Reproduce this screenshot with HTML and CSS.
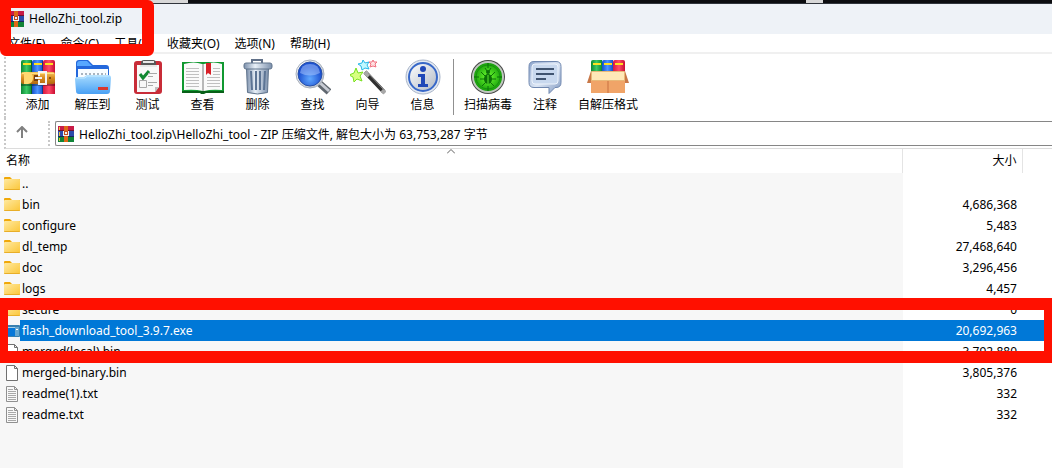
FILE: index.html
```html
<!DOCTYPE html>
<html lang="zh-CN">

<head>
    <meta charset="UTF-8">
    <meta name="viewport" content="width=device-width, initial-scale=1.0">
    <title>HelloZhi_tool.zip</title>
    <link rel="stylesheet" href="styles.css">
</head>

<body>

    <!-- shared icons -->
    <svg class="defs" aria-hidden="true">
        <defs>
            <linearGradient id="g-red"><stop offset="0" stop-color="#d81840"/><stop offset=".5" stop-color="#ff4c68"/><stop offset="1" stop-color="#c80c32"/></linearGradient>
            <linearGradient id="g-blue"><stop offset="0" stop-color="#1450c8"/><stop offset=".5" stop-color="#4c94ff"/><stop offset="1" stop-color="#1450c8"/></linearGradient>
            <linearGradient id="g-green"><stop offset="0" stop-color="#0c8834"/><stop offset=".5" stop-color="#3cc864"/><stop offset="1" stop-color="#0c8834"/></linearGradient>
            <linearGradient id="g-gold" x2="0" y2="1"><stop offset="0" stop-color="#f8c860"/><stop offset=".5" stop-color="#d88c20"/><stop offset="1" stop-color="#b06810"/></linearGradient>
            <linearGradient id="g-sky" x2="0" y2="1"><stop offset="0" stop-color="#a8dcff"/><stop offset="1" stop-color="#48a0f4"/></linearGradient>
            <linearGradient id="g-steel"><stop offset="0" stop-color="#7c90ac"/><stop offset=".4" stop-color="#e8f0f8"/><stop offset="1" stop-color="#7c90ac"/></linearGradient>
            <linearGradient id="g-silver" x2="1" y2="1"><stop offset="0" stop-color="#fff"/><stop offset="1" stop-color="#b0b8c4"/></linearGradient>
            <linearGradient id="g-note" x2="1" y2="1"><stop offset="0" stop-color="#8ca4cc"/><stop offset=".5" stop-color="#dce6f4"/><stop offset="1" stop-color="#8098c0"/></linearGradient>
            <radialGradient id="g-lens" cy=".7"><stop offset="0" stop-color="#60a8ff"/><stop offset="1" stop-color="#1c50d0"/></radialGradient>
            <radialGradient id="g-scan"><stop offset="0" stop-color="#70ff30"/><stop offset="1" stop-color="#109808"/></radialGradient>
            <linearGradient id="g-folder" x2="1" y2="1"><stop offset="0" stop-color="#ffe9a0"/><stop offset="1" stop-color="#fbc638"/></linearGradient>
            <symbol id="i-rar" viewBox="0 0 16 16">
                <path fill="#c81c48" d="M0 0h16v5H0z"/>
                <path fill="#2c4cac" d="M0 5h16v6H0z"/>
                <path fill="#108438" d="M0 11h16v5H0z"/>
                <path fill="#701030" d="M0 4h16v1H0z"/>
                <path fill="#1c2460" d="M0 10h16v1H0z"/>
                <path fill="#e8c040" d="M1 1h1v3H1zM1 6h1v4H1zM1 12h1v3H1z"/>
                <path fill="#e06818" d="M6 0h4v16H6z"/>
                <path fill="#c04c20" d="M5 5h6v5H5z"/>
                <path fill="#f4f4f4" d="M5 5h1v4h4V5h1v5H5zM7 6h2v2H7z"/>
            </symbol>
            <symbol id="i-folder" viewBox="0 0 16 16">
                <path fill="#f0a808" d="M0 2q0-1 1-1h5l2 2h7q1 0 1 1v4H0z"/>
                <rect y="3" width="16" height="11" rx="1" fill="url(#g-folder)"/>
                <path fill="#e8ae28" d="M0 13h16q0 1-1 1H1q-1 0-1-1z"/>
            </symbol>
            <symbol id="i-file" viewBox="0 0 16 16">
                <path fill="#fff" stroke="#707070" d="M2.500.5h8l3 3v12h-11zM10.500.5v3h3"/>
            </symbol>
            <symbol id="i-text" viewBox="0 0 16 16">
                <path fill="#f8f8f8" stroke="#909090" d="M2.500.5h8l3 3v12h-11zM10.500.5v3h3"/>
                <path stroke="#a8a8a8" d="M4 3.500h5M4 5.500h8M4 7.500h8M4 9.500h8M4 11.500h8M4 13.500h8"/>
            </symbol>
            <symbol id="i-exe" viewBox="0 0 16 16">
                <path fill="#a8d0e8" stroke="#3880b0" d="M.5 2.500h15v11H.5z"/>
                <path fill="#3880b0" d="M1 2h14v2H1z"/>
                <path fill="#0878d8" d="M8 5h6v7H8z"/>
                <path fill="#0878d8" d="M3 5h8v8H3z"/>
                <path fill="#68a8d0" d="M11 4h4v9h-4z"/>
                <path fill="#fff" d="M12 6h2v1h-2z"/>
            </symbol>
        </defs>
    </svg>

    <div class="desktop"><span></span><i></i></div>

    <header class="titlebar">
        <svg class="icon"><use href="#i-rar"/></svg>
        <h1>HelloZhi_tool.zip</h1>
    </header>

    <nav class="menu">
        <button>文件(F)</button>
        <button>命令(C)</button>
        <button>工具(S)</button>
        <button>收藏夹(O)</button>
        <button>选项(N)</button>
        <button>帮助(H)</button>
    </nav>

    <div class="toolbar">
        <button>
            <svg viewBox="0 0 36 36">
                <path fill="url(#g-green)" d="M1 3q0-2 2-2h9v34H1z"/>
                <path fill="url(#g-blue)" d="M12 3q0-2 2-2h9v34H12z"/>
                <path fill="url(#g-red)" d="M23 3q0-2 2-2h8q2 0 2 2v32H23z"/>
                <path fill="#ffe020" d="M3 4h8v2H3zM14 4h8v2h-8zM25 4h8v2h-8z"/>
                <path fill="#00000050" d="M11 2h1v33h-1zM22 2h1v33h-1zM1 25h34v2H1z"/>
                <rect y="13" x="1" width="34" height="12" rx="2" fill="url(#g-gold)"/>
                <path fill="none" stroke="#ffe080" d="M2 14.500h32"/>
                <path fill="#ffd870" d="M4 13h4q5 1 5 6t-5 6H4z"/>
                <path fill="#784010" d="M14 16h4v6h-4z"/>
                <path fill="none" stroke="#f4f4f4" stroke-width="2" d="M19 17v-4h7v12h-7v-4M15 19h7"/>
                <path fill="#884c10" d="M29 18h2v2h-2z"/>
            </svg>
            <span>添加</span>
        </button>
        <button>
            <svg viewBox="0 0 36 36">
                <path fill="#2468dc" d="M1 4q0-3 3-3h9l5 5h13q3 0 3 3v12H1z"/>
                <path fill="#58a8ff" d="M2 5q0-3 3-3h7l5 5H2z"/>
                <path fill="#f8fcff" d="M3 10h30v11H3z"/>
                <path stroke="#a8b4c0" stroke-width="2" stroke-dasharray="2 2" d="M6 15h25"/>
                <path fill="url(#g-sky)" d="M0 20q0-2 2-2h7l3-2h21q3 0 3 3l-1 13q0 3-3 3H4q-3 0-3-3z"/>
                <path fill="none" stroke="#c8ecff" d="M1.500 19h8l3-2h21"/>
                <path fill="#d83830" d="M23 28h10v3H23z"/>
            </svg>
            <span>解压到</span>
        </button>
        <button>
            <svg viewBox="0 0 36 36">
                <rect x="4" y="2" width="28" height="33" rx="3" fill="#c82c38"/>
                <path fill="#f8f8f8" d="M7 6h22v22l-4 5H7z"/>
                <path fill="#c0c0c0" d="M29 28h-4v5z"/>
                <rect x="11" y="1" width="15" height="7" rx="3" fill="#585858"/>
                <path stroke="#e8e8e8" stroke-width="2" d="M13 3h11M10 7h17"/>
                <path fill="none" stroke="#108830" stroke-width="3" d="m10 15 3 4 6-7"/>
                <path fill="none" stroke="#a8a8a8" d="M9.500 21.500h7v7h-7zM18 14.500h9M18 17.500h5M18 23.500h9M18 26.500h5"/>
            </svg>
            <span>测试</span>
        </button>
        <button>
            <svg class="wide" viewBox="0 0 42 36">
                <path fill="#109830" d="M0 3h42v31H0z"/>
                <path fill="#086018" d="M0 32h42v2H24l-2 1h-3l-1-1H0z"/>
                <path fill="#fafafa" d="M2 5q10-3 18 0l1 27q-8-2-19-1zM22 5q10-3 18 0v26q-11-1-18 1z"/>
                <path fill="#b8b8b8" d="M20 5h2v27h-2z"/>
                <path stroke="#c0c0c0" d="M4 9.500h13M4 12.500h13M4 15.500h13M4 18.500h13M4 21.500h13M4 24.500h13M4 27.500h13M25 18.500h13M25 21.500h13M25 24.500h13M25 27.500h13M31 9.500h7M31 12.500h7M31 15.500h7"/>
                <path fill="#d82028" d="M24 4h5v12l-3-2-2 2z"/>
            </svg>
            <span>查看</span>
        </button>
        <button>
            <svg viewBox="0 0 36 36">
                <path fill="none" stroke="#607088" stroke-width="2" d="M12 4V1h10v3"/>
                <path fill="url(#g-steel)" stroke="#60748c" d="M6.500 9.500h22l-1 24q-10 3-20 0z"/>
                <path stroke="#5c7494" stroke-width="2" d="m11 12 1 19M16 12v19M20 12v19M25 12l-1 19"/>
                <rect x="4" y="4" width="28" height="6" rx="2" fill="url(#g-steel)" stroke="#60748c"/>
            </svg>
            <span>删除</span>
        </button>
        <button>
            <svg viewBox="0 0 36 36">
                <path stroke="#606870" stroke-width="7" d="m24 24 10 9"/>
                <path stroke="#c8ccd4" stroke-width="3" d="m24 23 10 9"/>
                <circle cx="15" cy="15" r="14" fill="url(#g-silver)" stroke="#a8b0bc"/>
                <circle cx="15" cy="15" r="12" fill="url(#g-lens)" stroke="#2850a8"/>
                <path fill="#b0ccff" fill-opacity=".5" d="M5 14q1-9 10-9t10 9q-10 5-20 0z"/>
            </svg>
            <span>查找</span>
        </button>
        <button>
            <svg viewBox="0 0 36 36">
                <path stroke="#303030" stroke-width="4" d="m15 13 19 20"/>
                <path stroke="#a8a8a8" stroke-width="4" d="m15 13 4 4M32 31l3 3"/>
                <path stroke="#909090" d="m18 14 16 17"/>
                <path fill="#d8ff80" stroke="#78e020" d="m6 9 2 5 5-1-3 4 2 5-5-2-3 3-1-5-4-2 5-2z"/>
                <path fill="#c0f8ff" stroke="#28b8e8" d="m13 1 2 3 4-1-2 3 2 4-4-1-3 2-1-4-3-2 4-1z"/>
                <path fill="#ffe0e0" stroke="#f07080" d="m23 1 1 2 3 0-2 2 1 3-3-1-3 1 1-3-2-2 3 0z"/>
            </svg>
            <span>向导</span>
        </button>
        <button>
            <svg viewBox="0 0 36 36">
                <circle cx="18" cy="18" r="17" fill="#e4eaf2" stroke="#a8b4c8"/>
                <circle cx="18" cy="18" r="14" fill="url(#g-silver)" stroke="#3868c8" stroke-width="2"/>
                <circle cx="18" cy="10" r="3" fill="#2048b8"/>
                <path fill="#2048b8" d="M13 15h7v10h3v3H13v-3h3v-7h-3z"/>
            </svg>
            <span>信息</span>
        </button>
        <hr>
        <button class="medium">
            <svg viewBox="0 0 36 36">
                <circle cx="18" cy="18" r="17" fill="#484848"/>
                <circle cx="18" cy="18" r="15" fill="url(#g-scan)" stroke="#c0c8c0" stroke-width="2"/>
                <circle cx="18" cy="18" r="12" fill="none" stroke="#189010"/>
                <path stroke="#087008" d="M18 4v5M18 27v5M4 18h5M27 18h5"/>
                <ellipse cx="18" cy="20" rx="4" ry="5" fill="#0c7008"/>
                <circle cx="18" cy="13" r="2" fill="#0c7008"/>
                <path fill="none" stroke="#0c7008" d="m11 13 4 4h6l4-4M10 20h16M12 27l4-4h4l4 4M15 9l2 3M21 9l-2 3"/>
                <path stroke="#60e830" d="M18 16v9"/>
            </svg>
            <span>扫描病毒</span>
        </button>
        <button class="small">
            <svg viewBox="0 0 36 36">
                <path fill="url(#g-note)" stroke="#7088b0" d="M7 2.500h22q5 0 5 5v16q0 5-5 5h-1l-6 6v-6H7q-5 0-5-5v-16q0-5 5-5z"/>
                <rect x="5" y="5" width="26" height="20" rx="3" fill="#c8d8ee" stroke="#eef4fc"/>
                <path stroke="#405470" stroke-width="2" d="M9 10h18M9 15h18M9 20h10"/>
            </svg>
            <span>注释</span>
        </button>
        <button class="large">
            <svg class="wide" viewBox="0 0 42 36">
                <path fill="url(#g-green)" d="M4 3q0-2 2-2h9v12H4z"/>
                <path fill="url(#g-blue)" d="M15 3q0-2 2-2h9v12H15z"/>
                <path fill="url(#g-red)" d="M26 3q0-2 2-2h8q2 0 2 2v10H26z"/>
                <path fill="#ffe020" d="M6 4h8v2H6zM17 4h8v2h-8zM28 4h8v2h-8z"/>
                <path fill="#c87848" d="m4 12-4 12h4zM38 12l4 12h-4z"/>
                <path fill="#f0a468" d="M4 20h34v14H4z"/>
                <path fill="#ffe8b8" stroke="#e8b878" d="M4.500 12.500h33v9h-33z"/>
                <path stroke="#c87040" d="M21 22v12"/>
            </svg>
            <span>自解压格式</span>
        </button>
    </div>

    <div class="address">
        <button class="up" aria-label="↑">
            <svg viewBox="0 0 12 12"><path fill="none" stroke="#808080" stroke-width="2" d="M6 12V2M1 6l5-5 5 5"/></svg>
        </button>
        <label class="path">
            <svg class="icon"><use href="#i-rar"/></svg>
            <input type="text" aria-label="地址" value="HelloZhi_tool.zip\HelloZhi_tool - ZIP 压缩文件, 解包大小为 63,753,287 字节">
        </label>
    </div>

    <main class="list">
        <table>
            <thead>
                <tr>
                    <th class="name">名称<svg class="sort" viewBox="0 0 8 5"><path fill="none" stroke="#606060" d="m0 4.500 4-4 4 4"/></svg></th>
                    <th class="size">大小</th>
                    <th class="rest"></th>
                </tr>
            </thead>
            <tbody>
                <tr><td><svg class="icon"><use href="#i-folder"/></svg><span>..</span></td><td></td><td></td></tr>
                <tr><td><svg class="icon"><use href="#i-folder"/></svg><span>bin</span></td><td>4,686,368</td><td></td></tr>
                <tr><td><svg class="icon"><use href="#i-folder"/></svg><span>configure</span></td><td>5,483</td><td></td></tr>
                <tr><td><svg class="icon"><use href="#i-folder"/></svg><span>dl_temp</span></td><td>27,468,640</td><td></td></tr>
                <tr><td><svg class="icon"><use href="#i-folder"/></svg><span>doc</span></td><td>3,296,456</td><td></td></tr>
                <tr><td><svg class="icon"><use href="#i-folder"/></svg><span>logs</span></td><td>4,457</td><td></td></tr>
                <tr><td><svg class="icon"><use href="#i-folder"/></svg><span>secure</span></td><td>0</td><td></td></tr>
                <tr class="selected"><td><svg class="icon"><use href="#i-exe"/></svg><span>flash_download_tool_3.9.7.exe</span></td><td>20,692,963</td><td></td></tr>
                <tr><td><svg class="icon"><use href="#i-file"/></svg><span>merged(local).bin</span></td><td>3,792,880</td><td></td></tr>
                <tr><td><svg class="icon"><use href="#i-file"/></svg><span>merged-binary.bin</span></td><td>3,805,376</td><td></td></tr>
                <tr><td><svg class="icon"><use href="#i-text"/></svg><span>readme(1).txt</span></td><td>332</td><td></td></tr>
                <tr><td><svg class="icon"><use href="#i-text"/></svg><span>readme.txt</span></td><td>332</td><td></td></tr>
            </tbody>
        </table>
        <div class="mark mark-file"></div>
    </main>

    <div class="mark mark-title"></div>

</body>

</html>
```
FILE: styles.css
```css
* {
    box-sizing: border-box;
}

body {
    position: relative;
    display: flex;
    flex-direction: column;
    min-height: 100vh;
    margin: 0;
    background: #fff;
    color: #000;
    font-family: "Noto Sans", "Noto Sans CJK SC", sans-serif;
    font-size: 12px;
    line-height: 18px;
}

button,
input {
    padding: 0;
    border: 0;
    background: none;
    color: inherit;
    font: inherit;
}

svg {
    display: block;
    flex: none;
}

.defs {
    position: absolute;
    width: 0;
    height: 0;
}

.icon {
    width: 16px;
    height: 16px;
}

/* strip of the window behind */
.desktop {
    display: flex;
    height: 4px;
    background: #0c0d10;
    border-bottom: 1px solid #30353c;
}

.desktop span {
    width: 188px;
    background: #d8d8d8;
}

.desktop i {
    width: 17px;
    margin-left: 618px;
    background: #d8d8d8;
}

.titlebar {
    display: flex;
    align-items: center;
    gap: 5px;
    height: 30px;
    padding-left: 8px;
    background: #eef2f7;
}

.titlebar h1 {
    margin: 0;
    font-size: 12px;
    font-weight: normal;
}

.menu {
    display: flex;
    gap: 15px;
    height: 20px;
    padding: 1px 0 0 8px;
    border-bottom: 2px solid #f0f0f0;
}

.menu button {
    height: 18px;
}

.toolbar {
    display: flex;
    height: 64px;
    margin-left: 4px;
    padding: 5px 0 0 4px;
    border-left: 2px dotted #c8c8c8;
}

.toolbar button {
    display: flex;
    flex-direction: column;
    align-items: center;
    gap: 1px;
    width: 55px;
    white-space: nowrap;
}

.toolbar svg {
    width: 36px;
    height: 36px;
}

.toolbar svg.wide {
    width: 42px;
}

.toolbar hr {
    width: 1px;
    height: 56px;
    margin: 0 2px 0 3px;
    border: 0;
    background: #909090;
}

.toolbar .medium {
    width: 64px;
}

.toolbar .small {
    width: 50px;
}

.toolbar .large {
    width: 76px;
}

.address {
    display: flex;
    height: 31px;
    margin-left: 4px;
    padding: 3px 0 2px;
    border-left: 2px dotted #c8c8c8;
    border-bottom: 1px solid #dcdcdc;
}

.up {
    display: flex;
    align-items: center;
    justify-content: center;
    width: 44px;
    margin-right: 5px;
    padding: 0 10px 3px 0;
    border-right: 2px dotted #c8c8c8;
}

.up svg {
    width: 12px;
    height: 12px;
}

.path {
    display: flex;
    flex: 1;
    align-items: center;
    gap: 5px;
    padding-left: 2px;
    border: 1px solid #868686;
    border-right: 0;
    border-radius: 2px 0 0 2px;
}

.path input {
    flex: 1;
    min-width: 0;
    padding-top: 2px;
}

/* name column is shaded down to the bottom of the window */
.list {
    position: relative;
    flex: 1;
    background: linear-gradient(#f7f7f7, #f7f7f7) no-repeat 0 0 / calc(100% - 149px) 100%;
}

table {
    width: 100%;
    border-collapse: collapse;
    table-layout: fixed;
}

th {
    position: relative;
    height: 24px;
    padding: 0 6px;
    border-right: 1px solid #e4e4e4;
    background: #fff;
    font-weight: normal;
    text-align: left;
}

th.size {
    width: 120px;
    padding-right: 5px;
    text-align: right;
}

th.rest {
    width: 30px;
    border-right: 0;
}

.sort {
    position: absolute;
    top: 0;
    left: 50%;
    width: 8px;
    height: 5px;
    margin-left: -4px;
}

td {
    height: 21px;
    padding: 0 5px 0 0;
    text-align: right;
}

td:first-child {
    display: flex;
    align-items: center;
    gap: 2px;
    padding: 0 0 0 4px;
}

.selected td {
    background: #0078d7;
    color: #fff;
}

.selected td:first-child {
    background: linear-gradient(90deg, #f7f7f7 20px, #0078d7 20px);
}

.mark {
    position: absolute;
    border: 12px solid #ff1000;
    pointer-events: none;
}

.mark-title {
    top: 0;
    left: 0;
    width: 154px;
    height: 56px;
    border-width: 8px 12px 12px 11px;
    border-radius: 0 6px 6px 6px;
}

.mark-file {
    top: 149px;
    left: 0;
    right: 0;
    height: 65px;
    border-width: 12px 8px;
}
```
